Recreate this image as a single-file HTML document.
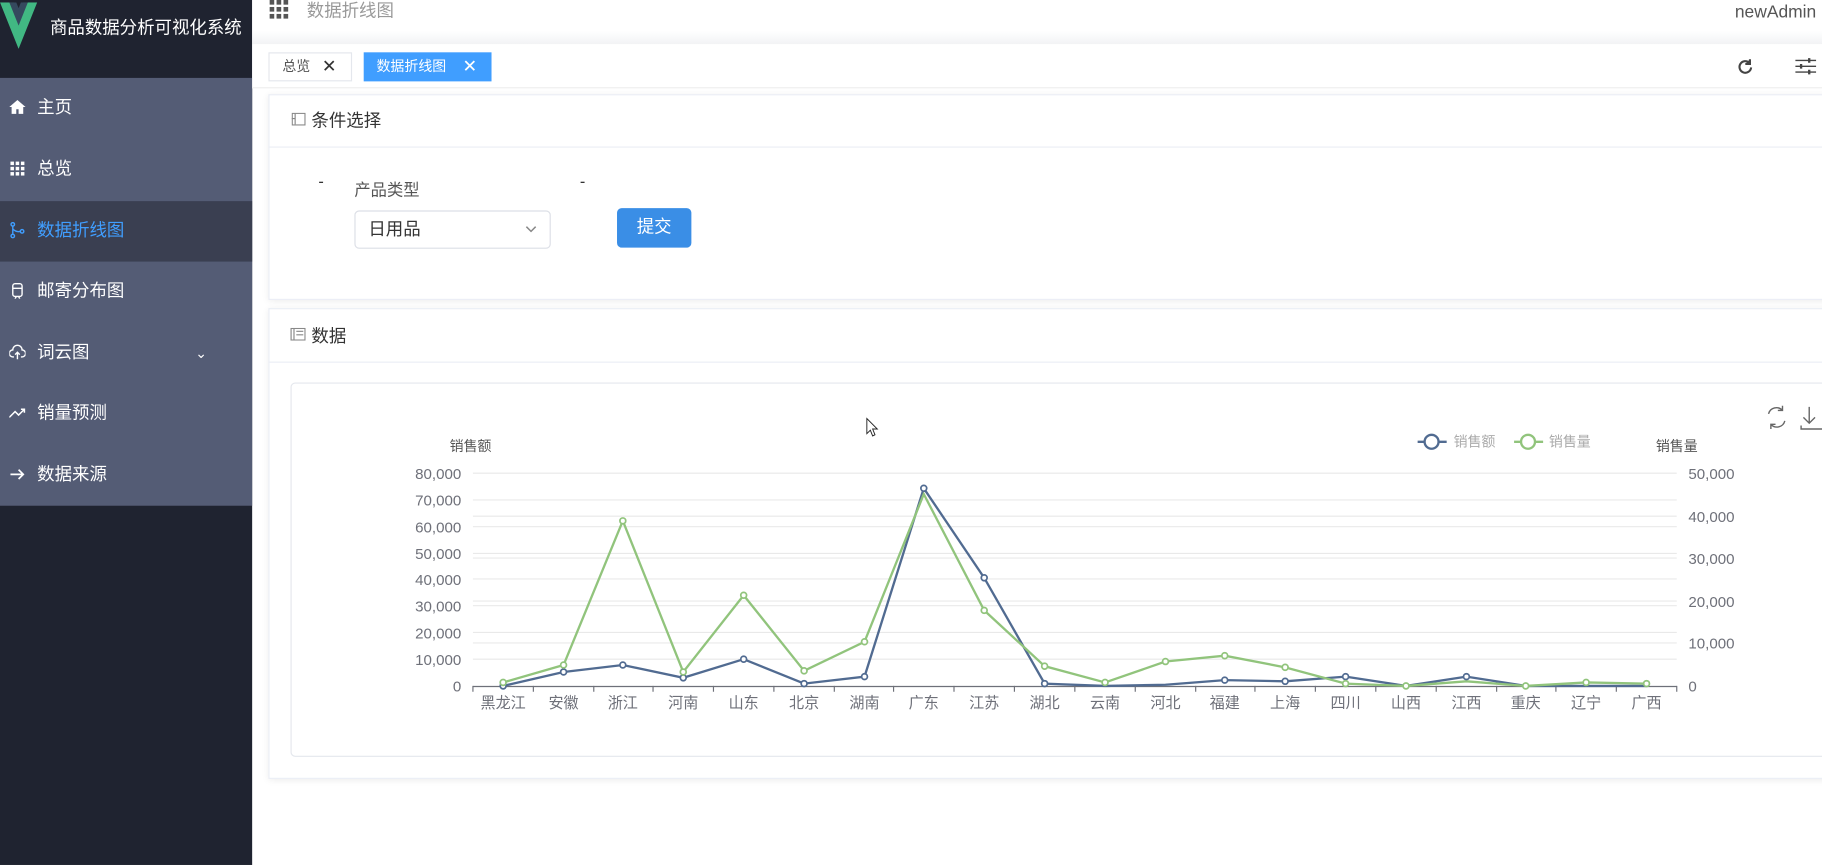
<!DOCTYPE html>
<html><head><meta charset="utf-8"><style>
*{margin:0;padding:0;box-sizing:border-box}
html,body{width:1822px;height:865px;overflow:hidden;background:#fff;font-family:"Liberation Sans","Noto Sans CJK SC",sans-serif}
#w{position:absolute;left:0;top:0;width:1568px;height:744px;transform:scale(1.16199,1.1626);transform-origin:0 0;background:#fff}
.a{position:absolute}
.side{left:0;top:0;width:217px;height:744px;background:#1f2330}
.menu{left:0;top:67px;width:217px;height:368px;background:#545c75}
.mi{position:absolute;left:0;width:217px;height:52px;color:#fff;font-size:15px;line-height:52px;padding-left:32px}
.mi .ic{position:absolute;left:8px;top:18px;width:14px;height:14px}
.card{background:#fff;border:1px solid #ebeef5;box-shadow:0 1px 6px rgba(0,0,0,.08)}
</style></head><body><div id="w">
<div class="a side"></div>
<svg class="a" style="left:0;top:2px" width="34" height="40"><polygon points="0,0 12,0 16,10 20,0 32,0 16,40" fill="#41b883"/><polygon points="8,0 14,0 16,5 18,0 24,0 16,20" fill="#35495e"/></svg>
<div class="a" style="left:43px;top:13px;color:#fff;font-size:15px">商品数据分析可视化系统</div>
<div class="a menu"></div>
<div class="mi" style="top:67px"><svg class="ic" viewBox="0 0 14 14"><path d="M7 1L0 7h2v6h4V9h2v4h4V7h2z" fill="#fff"/></svg>主页</div>
<div class="mi" style="top:120px"><svg class="ic" viewBox="0 0 14 14" fill="#fff"><rect x="1" y="1" width="3" height="3"/><rect x="5.5" y="1" width="3" height="3"/><rect x="10" y="1" width="3" height="3"/><rect x="1" y="5.5" width="3" height="3"/><rect x="5.5" y="5.5" width="3" height="3"/><rect x="10" y="5.5" width="3" height="3"/><rect x="1" y="10" width="3" height="3"/><rect x="5.5" y="10" width="3" height="3"/><rect x="10" y="10" width="3" height="3"/></svg>总览</div>
<div class="mi" style="top:173px;background:#3a3f51;color:#409eff"><svg class="ic" viewBox="0 0 14 14" fill="none" stroke="#409eff" stroke-width="1.2"><circle cx="3" cy="2" r="1.5"/><circle cx="3" cy="12" r="1.5"/><circle cx="11" cy="8" r="1.5"/><path d="M3 3.5v7M3 6q3 3 6.5 2"/></svg>数据折线图</div>
<div class="mi" style="top:225px"><svg class="ic" viewBox="0 0 14 14" fill="none" stroke="#fff" stroke-width="1.2"><rect x="3" y="1" width="8" height="11" rx="2"/><path d="M3 5h8M5 14l1-2M9 14l-1-2"/></svg>邮寄分布图</div>
<div class="mi" style="top:278px"><svg class="ic" viewBox="0 0 14 14" fill="none" stroke="#fff" stroke-width="1.2"><path d="M4 11H3a3 3 0 010-6 4 4 0 018 0 3 3 0 010 6h-1M7 7v6M5 9l2-2 2 2"/></svg>词云图<span style="position:absolute;left:168px;top:0;font-size:12px">&#8964;</span></div>
<div class="mi" style="top:330px"><svg class="ic" viewBox="0 0 14 14" fill="none" stroke="#fff" stroke-width="1.3"><path d="M0 11l5-5 3 3 5-5M10 4h3v3"/></svg>销量预测</div>
<div class="mi" style="top:383px"><svg class="ic" viewBox="0 0 14 14" fill="none" stroke="#fff" stroke-width="1.5"><path d="M1 7h11M8 3l4 4-4 4"/></svg>数据来源</div>

<div class="a" style="left:217px;top:0;width:1351px;height:38px;background:linear-gradient(#fff 70%,#f2f3f5);"></div>
<svg class="a" style="left:232px;top:0" width="18" height="18" fill="#555"><rect x="0" y="0" width="4" height="4"/><rect x="6" y="0" width="4" height="4"/><rect x="12" y="0" width="4" height="4"/><rect x="0" y="6" width="4" height="4"/><rect x="6" y="6" width="4" height="4"/><rect x="12" y="6" width="4" height="4"/><rect x="0" y="12" width="4" height="4"/><rect x="6" y="12" width="4" height="4"/><rect x="12" y="12" width="4" height="4"/></svg>
<div class="a" style="left:264px;top:-2px;color:#999;font-size:15px">数据折线图</div>
<div class="a" style="left:1493px;top:2px;color:#555;font-size:15px">newAdmin</div>
<div class="a" style="left:217px;top:38px;width:1351px;height:38px;background:#fff;border-bottom:1px solid #eee"></div>
<div class="a" style="left:231px;top:45px;width:72px;height:25px;border:1px solid #e4e7ed;font-size:12px;color:#555;line-height:23px;padding-left:11px">总览<span style="position:absolute;left:45px;top:0;font-size:15px;color:#333">✕</span></div>
<div class="a" style="left:313px;top:45px;width:110px;height:25px;background:#409eff;font-size:12px;color:#fff;line-height:25px;padding-left:11px">数据折线图<span style="position:absolute;left:85px;top:0;font-size:15px">✕</span></div>
<svg class="a" style="left:1495px;top:50px" width="15" height="15" fill="none" stroke="#444" stroke-width="1.8"><path d="M12 8a5 5 0 11-1.5-4"/><path d="M11 1v4H7" fill="#444"/></svg>
<svg class="a" style="left:1545px;top:49px" width="18" height="16" stroke="#444" stroke-width="1.2"><path d="M0 3h18M0 8h18M0 13h18"/><path d="M12 1v4M5 6v4M12 11v4" stroke-width="2"/></svg>

<div class="a card" style="left:231px;top:81px;width:1345px;height:177px"></div>
<div class="a" style="left:231px;top:126px;width:1337px;height:1px;background:#ebeef5"></div>
<svg class="a" style="left:251px;top:97px" width="12" height="11" fill="none" stroke="#888"><rect x="0.5" y="0.5" width="11" height="10"/><path d="M3 1v9M0 5h3"/></svg>
<div class="a" style="left:268px;top:93px;font-size:15px;color:#333">条件选择</div>
<div class="a" style="left:274px;top:148px;font-size:14px;color:#333">-</div>
<div class="a" style="left:305px;top:153px;font-size:14px;color:#555">产品类型</div>
<div class="a" style="left:305px;top:181px;width:169px;height:33px;border:1px solid #dcdfe6;border-radius:4px;font-size:15px;color:#333;line-height:31px;padding-left:11px">日用品<svg style="position:absolute;left:146px;top:12px" width="10" height="7" fill="none" stroke="#888" stroke-width="1.3"><path d="M1 1l4 4 4-4"/></svg></div>
<div class="a" style="left:499px;top:148px;font-size:14px;color:#333">-</div>
<div class="a" style="left:531px;top:179px;width:64px;height:34px;background:#3a8ee6;border-radius:4px;color:#fff;font-size:15px;line-height:34px;text-align:center">提交</div>

<div class="a card" style="left:231px;top:265px;width:1345px;height:405px"></div>
<div class="a" style="left:231px;top:311px;width:1337px;height:1px;background:#ebeef5"></div>
<svg class="a" style="left:250px;top:282px" width="13" height="11" fill="none" stroke="#888"><rect x="0.5" y="0.5" width="12" height="10"/><path d="M3 1v9M5 3h6M5 6h6"/></svg>
<div class="a" style="left:268px;top:278px;font-size:15px;color:#333">数据</div>
<div class="a" style="left:250px;top:329px;width:1330px;height:322px;border:1px solid #e4e7ed;border-radius:4px"></div>

<svg class="a" style="left:0;top:0" width="1568" height="744" font-family="Liberation Sans,Noto Sans CJK SC,sans-serif">
<g stroke="#e9e9e9" stroke-width="1">
<path d="M407 407H1443M407 430H1443M407 453H1443M407 476H1443M407 498H1443M407 521H1443M407 544H1443M407 567H1443M407 444H1443M407 480H1443M407 517H1443M407 553H1443"/></g>
<path d="M407 590.5H1443" stroke="#6e7079"/>
<g stroke="#6e7079"><path d="M407 590v5M459 590v5M511 590v5M562 590v5M614 590v5M666 590v5M718 590v5M769 590v5M821 590v5M873 590v5M925 590v5M977 590v5M1029 590v5M1080 590v5M1132 590v5M1184 590v5M1236 590v5M1288 590v5M1339 590v5M1391 590v5M1443 590v5"/></g>
<g font-size="13" fill="#6e7079" text-anchor="end">
<text x="397" y="412">80,000</text><text x="397" y="435">70,000</text><text x="397" y="458">60,000</text><text x="397" y="481">50,000</text><text x="397" y="503">40,000</text><text x="397" y="526">30,000</text><text x="397" y="549">20,000</text><text x="397" y="572">10,000</text><text x="397" y="595">0</text></g>
<g font-size="13" fill="#6e7079">
<text x="1453" y="412">50,000</text><text x="1453" y="449">40,000</text><text x="1453" y="485">30,000</text><text x="1453" y="522">20,000</text><text x="1453" y="558">10,000</text><text x="1453" y="595">0</text></g>
<g font-size="12" fill="#555"><text x="387" y="388">销售额</text><text x="1425" y="388">销售量</text></g>
<g font-size="13" fill="#6e7079" text-anchor="middle">
<text x="433" y="609">黑龙江</text><text x="485" y="609">安徽</text><text x="536" y="609">浙江</text><text x="588" y="609">河南</text><text x="640" y="609">山东</text><text x="692" y="609">北京</text><text x="744" y="609">湖南</text><text x="795" y="609">广东</text><text x="847" y="609">江苏</text><text x="899" y="609">湖北</text><text x="951" y="609">云南</text><text x="1003" y="609">河北</text><text x="1054" y="609">福建</text><text x="1106" y="609">上海</text><text x="1158" y="609">四川</text><text x="1210" y="609">山西</text><text x="1262" y="609">江西</text><text x="1313" y="609">重庆</text><text x="1365" y="609">辽宁</text><text x="1417" y="609">广西</text></g>
<g id="b" fill="none" stroke="#5470a0" stroke-width="2">
<polyline points="433,590 485,578 536,572 588,583 640,567 692,588 744,582 795,420 847,497 899,588 951,590 1003,589 1054,585 1106,586 1158,582 1210,590 1262,582 1313,590 1365,590 1417,590" stroke="#516b91"/></g>
<polyline fill="none" stroke="#91c47c" stroke-width="2" points="433,587 485,572 536,448 588,578 640,512 692,577 744,552 795,425 847,525 899,573 951,587 1003,569 1054,564 1106,574 1158,588 1210,590 1262,586 1313,590 1365,587 1417,588"/>
<g fill="#fff" stroke="#516b91" stroke-width="1.5">
<circle cx="433" cy="590" r="2.5"/><circle cx="485" cy="578" r="2.5"/><circle cx="536" cy="572" r="2.5"/><circle cx="588" cy="583" r="2.5"/><circle cx="640" cy="567" r="2.5"/><circle cx="692" cy="588" r="2.5"/><circle cx="744" cy="582" r="2.5"/><circle cx="795" cy="420" r="2.5"/><circle cx="847" cy="497" r="2.5"/><circle cx="899" cy="588" r="2.5"/><circle cx="1054" cy="585" r="2.5"/><circle cx="1106" cy="586" r="2.5"/><circle cx="1158" cy="582" r="2.5"/><circle cx="1262" cy="582" r="2.5"/></g>
<g fill="#fff" stroke="#91c47c" stroke-width="1.5">
<circle cx="433" cy="587" r="2.5"/><circle cx="485" cy="572" r="2.5"/><circle cx="536" cy="448" r="2.5"/><circle cx="588" cy="578" r="2.5"/><circle cx="640" cy="512" r="2.5"/><circle cx="692" cy="577" r="2.5"/><circle cx="744" cy="552" r="2.5"/><circle cx="847" cy="525" r="2.5"/><circle cx="899" cy="573" r="2.5"/><circle cx="951" cy="587" r="2.5"/><circle cx="1003" cy="569" r="2.5"/><circle cx="1054" cy="564" r="2.5"/><circle cx="1106" cy="574" r="2.5"/><circle cx="1158" cy="588" r="2.5"/><circle cx="1210" cy="590" r="2.5"/><circle cx="1313" cy="590" r="2.5"/><circle cx="1365" cy="587" r="2.5"/><circle cx="1417" cy="588" r="2.5"/></g>
<path d="M1220 380h25" stroke="#516b91" stroke-width="2"/><circle cx="1232" cy="380" r="6" fill="#fff" stroke="#516b91" stroke-width="2"/>
<text x="1251" y="384" font-size="12" fill="#aaa">销售额</text>
<path d="M1303 380h25" stroke="#91c47c" stroke-width="2"/><circle cx="1315" cy="380" r="6" fill="#fff" stroke="#91c47c" stroke-width="2"/>
<text x="1333" y="384" font-size="12" fill="#aaa">销售量</text>
<g fill="none" stroke="#666" stroke-width="1.2"><path d="M1522 356a7 7 0 0112-3M1536 362a7 7 0 01-12 3M1534 349v4h-4M1524 369v-4h4"/><path d="M1557 350v14M1552 359l5 5 5-5M1550 366v3h18"/></g>
<path d="M746 360v13l3-3 2 5 2-1-2-5h4z" fill="#fff" stroke="#222" stroke-width=".8"/>
</svg>
</div></body></html>
